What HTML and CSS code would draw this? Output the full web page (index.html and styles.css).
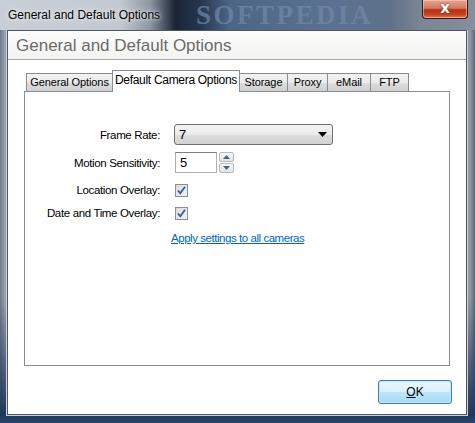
FILE: index.html
```html
<!DOCTYPE html>
<html>
<head>
<meta charset="utf-8">
<link rel="stylesheet" href="styles.css">
</head>
<body>
<div class="window">
  <div class="titlebar">
    <span class="title">General and Default Options</span>
    <span class="watermark">SOFTPEDIA</span>
    <div class="close"><span>x</span></div>
  </div>
  <div class="client">
    <div class="header">General and Default Options</div>
    <div class="tabs-wrap">
      <div class="tabstrip">
        <div class="tab t1">General Options</div>
        <div class="tab sel">Default Camera Options</div>
        <div class="tab t3">Storage</div>
        <div class="tab t4">Proxy</div>
        <div class="tab t5">eMail</div>
        <div class="tab t6">FTP</div>
      </div>
      <div class="panel">
        <div class="row r1">
          <div class="label">Frame Rate:</div>
          <div class="combo"><span>7</span>
            <svg class="arrow" width="9" height="5" viewBox="0 0 9 5"><path d="M0 0H9L4.5 5Z" fill="#000"/></svg>
          </div>
        </div>
        <div class="row r2">
          <div class="label">Motion Sensitivity:</div>
          <div class="spin-input">5</div>
          <div class="spin">
            <div class="sb up"><svg width="7" height="4" viewBox="0 0 7 4"><path d="M0 4H7L3.5 0Z" fill="#4d6185"/></svg></div>
            <div class="sb down"><svg width="7" height="4" viewBox="0 0 7 4"><path d="M0 0H7L3.5 4Z" fill="#4d6185"/></svg></div>
          </div>
        </div>
        <div class="row r3">
          <div class="label">Location Overlay:</div>
          <div class="check"><svg width="11" height="11" viewBox="0 0 11 11"><path d="M2 5.5L4.3 8.3L9 1.8" stroke="#3d5a9e" stroke-width="1.8" fill="none"/></svg></div>
        </div>
        <div class="row r4">
          <div class="label">Date and Time Overlay:</div>
          <div class="check"><svg width="11" height="11" viewBox="0 0 11 11"><path d="M2 5.5L4.3 8.3L9 1.8" stroke="#3d5a9e" stroke-width="1.8" fill="none"/></svg></div>
        </div>
        <div class="row r5">
          <a class="link" href="#">Apply settings to all cameras</a>
        </div>
      </div>
    </div>
    <div class="footer">
      <div class="ok"><span class="u">O</span>K</div>
    </div>
  </div>
</div>
</body>
</html>
```
FILE: styles.css
```css
html, body {
  margin: 0;
  padding: 0;
}
body {
  width: 475px;
  height: 423px;
  overflow: hidden;
  font-family: "Liberation Sans", Arial, sans-serif;
}
.window {
  width: 475px;
  height: 423px;
  box-sizing: border-box;
  position: relative;
  background:
    linear-gradient(to bottom, rgba(0,0,0,0) 0, rgba(0,0,0,0) 300px, #22365c 415px, #2c4470 423px),
    linear-gradient(to right, #6f7a88 0, #95a0ac 5px, #a9b3bd 8px, #8f98a3 470px, #5d6672 475px);
  display: flex;
  flex-direction: column;
}
.titlebar {
  height: 30px;
  position: relative;
  display: flex;
  align-items: center;
  background: linear-gradient(to right, #c9cfd6 0, #c3c9d0 120px, #8e97a3 150px, #1b2536 175px, #25354f 200px, #4d6584 230px, #5b7190 330px, #5f7189 390px, #7b8593 420px, #868f9b 475px);
  overflow: hidden;
}
.title {
  margin-left: 8px;
  margin-top: -1px;
  font-size: 12px;
  color: #000;
  position: relative;
  z-index: 2;
  text-shadow: 0 0 6px #e8ecf0, 0 0 3px #e8ecf0;
}
.watermark {
  position: absolute;
  left: 196px;
  top: 1px;
  font-family: "Liberation Serif", serif;
  font-weight: bold;
  font-size: 27px;
  line-height: 28px;
  letter-spacing: 2.5px;
  color: #7089ab;
  opacity: 0.7;
}
.close {
  position: absolute;
  right: 7px;
  top: 0;
  width: 46px;
  height: 19px;
  box-sizing: border-box;
  border: 1px solid #3b1813;
  border-top: none;
  border-radius: 0 0 4px 4px;
  background: linear-gradient(to bottom, #e8a493 0, #d37a62 45%, #b72f12 55%, #c6421f 80%, #e0775a 100%);
  box-shadow: inset 0 0 0 1px rgba(255,220,210,0.5);
  display: flex;
  align-items: center;
  justify-content: center;
  z-index: 3;
}
.close span {
  color: #fff;
  font-family: "DejaVu Sans", sans-serif;
  font-weight: bold;
  font-size: 15px;
  line-height: 15px;
  margin-top: -2px;
  text-shadow: 0 0 2px #5a1a0c;
}
.client {
  margin-left: 7px;
  width: 460px;
  height: 385px;
  box-sizing: border-box;
  border: 1px solid #4a5566;
  background: #fff;
  display: flex;
  flex-direction: column;
  box-shadow: 0 0 0 1px #c9d1da;
}
.header {
  height: 29px;
  box-sizing: border-box;
  background: linear-gradient(to bottom, #fdfdfd 0, #f3f3f1 100%);
  border-bottom: 1px solid #a7a7a7;
  font-size: 17px;
  color: #6b6b6b;
  padding-left: 8px;
  line-height: 29px;
}
.tabs-wrap {
  padding: 10px 0 0 16px;
  display: flex;
  flex-direction: column;
}
.tabstrip {
  display: flex;
  align-items: flex-end;
  height: 21px;
  padding-left: 2px;
  position: relative;
  z-index: 2;
}
.tab {
  box-sizing: border-box;
  height: 18px;
  border: 1px solid #898c95;
  border-bottom: none;
  margin-right: -1px;
  background: linear-gradient(to bottom, #f2f2f2 0, #ebebeb 50%, #dddddd 51%, #cfcfcf 100%);
  font-size: 11px;
  letter-spacing: -0.1px;
  line-height: 17px;
  color: #000;
  text-align: center;
  white-space: nowrap;
}
.t1 { width: 87px; }
.sel {
  width: 128px;
  height: 22px;
  background: #fff;
  margin-bottom: -1px;
  line-height: 18px;
  font-size: 12px;
  letter-spacing: -0.3px;
  position: relative;
  z-index: 3;
}
.t3 { width: 49px; }
.t4 { width: 41px; }
.t5 { width: 44px; }
.t6 { width: 39px; }
.panel {
  width: 426px;
  height: 275px;
  box-sizing: border-box;
  border: 1px solid #898c95;
  background: #fff;
  padding-top: 32px;
  display: flex;
  flex-direction: column;
  font-size: 11px;
}
.row {
  display: flex;
  align-items: center;
}
.label {
  width: 135px;
  text-align: right;
  margin-right: 14px;
  white-space: nowrap;
  color: #000;
  font-size: 11.5px;
  letter-spacing: -0.35px;
}
.r1 { height: 21px; margin-bottom: 7px; }
.r2 { height: 21px; margin-bottom: 6px; }
.r3 { height: 22px; }
.r4 { height: 22px; margin-top: 1px; }
.r5 { height: 18px; margin-top: 5px; padding-left: 146px; }
.combo {
  width: 159px;
  height: 21px;
  box-sizing: border-box;
  border: 1px solid #707070;
  border-radius: 3px;
  background: linear-gradient(to bottom, #f3f3f3 0, #ebebeb 50%, #dedede 51%, #d2d2d2 100%);
  display: flex;
  align-items: center;
  justify-content: space-between;
  padding: 0 5px 0 4px;
  font-size: 13px;
}
.spin-input {
  width: 42px;
  height: 21px;
  box-sizing: border-box;
  border: 1px solid #abadb3;
  border-top-color: #7a7e86;
  margin-left: 1px;
  padding-left: 4px;
  font-size: 13px;
  line-height: 19px;
}
.spin {
  margin-left: 2px;
  width: 15px;
  height: 21px;
  display: flex;
  flex-direction: column;
  gap: 1px;
}
.sb {
  flex: 1;
  box-sizing: border-box;
  border: 1px solid #b5b8c0;
  border-radius: 2px;
  background: linear-gradient(to bottom, #f7f7f7, #e4e4e4);
  display: flex;
  align-items: center;
  justify-content: center;
}
.check {
  width: 13px;
  height: 13px;
  box-sizing: border-box;
  margin-left: 1px;
  border: 1px solid #8e8f8f;
  background: linear-gradient(135deg, #d9dadb, #f4f4f4);
  display: flex;
  align-items: center;
  justify-content: center;
}
.link {
  color: #0066cc;
  text-decoration: underline;
  font-size: 11.5px;
  letter-spacing: -0.45px;
}
.footer {
  flex: 1;
  display: flex;
  justify-content: flex-end;
  align-items: flex-start;
  padding: 14px 14px 0 0;
}
.ok {
  width: 74px;
  height: 24px;
  box-sizing: border-box;
  border: 1px solid #3c7fb1;
  border-radius: 3px;
  background: linear-gradient(to bottom, #eaf6fd 0, #d9f0fc 50%, #bee6fd 51%, #a7d9f5 100%);
  box-shadow: inset 0 0 0 1px #c4e5f6;
  font-size: 12px;
  text-align: center;
  line-height: 22px;
  color: #000;
}
.u { text-decoration: underline; }
```
